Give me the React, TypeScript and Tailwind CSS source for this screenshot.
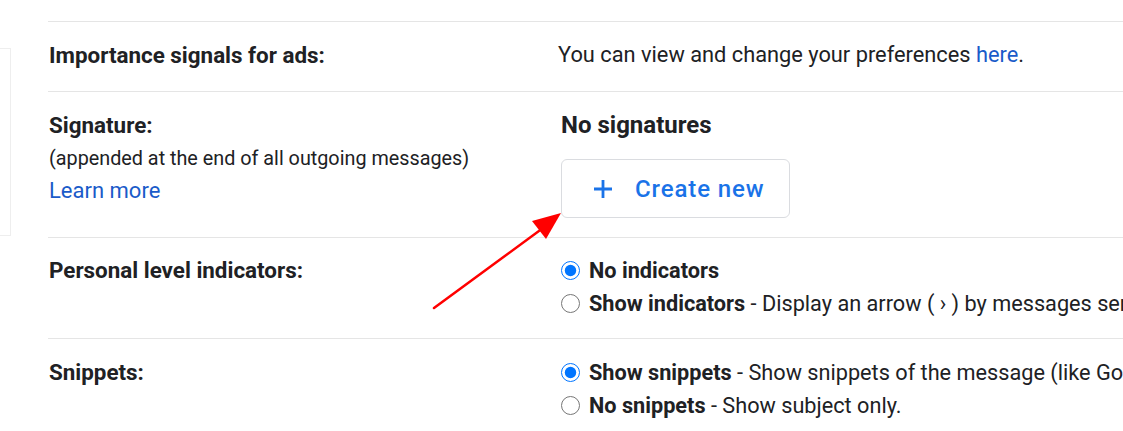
import React from "react";

const Label = ({ children }: { children: React.ReactNode }) => (
  <div className="text-[22.4px] leading-[24px] font-bold text-[#202124]">{children}</div>
);

const Radio = ({
  name,
  checked,
  title,
  desc,
}: {
  name: string;
  checked?: boolean;
  title: string;
  desc?: string;
}) => (
  <label className="flex items-center h-[33px] whitespace-nowrap">
    <input
      type="radio"
      name={name}
      defaultChecked={checked}
      className="m-0 w-[19px] h-[19px] accent-[#0075ff] shrink-0"
    />
    <span className="ml-[9px] text-[21.7px] leading-[24px] text-[#202124]">
      <b className="font-bold">{title}</b>
      {desc && <span> - {desc}</span>}
    </span>
  </label>
);

export default function App() {
  return (
    <div
      className="relative w-[1123px] h-[431px] overflow-hidden bg-white"
      style={{ fontFamily: "Roboto, 'Noto Sans', sans-serif" }}
    >
      <div className="flex">
        {/* edge of the left navigation panel */}
        <div className="mt-[48px] h-[188px] w-[11px] shrink-0 border-y border-r border-[#eeeeee]" />
        <div className="ml-[37px] flex-1 mt-[21px]">
          {/* Importance signals */}
          <div className="grid grid-cols-[510px_1fr] border-t border-[#e5e5e5] pt-[21px] h-[70px]">
            <div className="pl-[1px]">
              <Label>Importance signals for ads:</Label>
            </div>
            <div className="text-[21.8px] leading-[24px] text-[#202124] whitespace-nowrap">
              You can view and change your preferences{" "}
              <a className="text-[#1a5bc9]">here</a>.
            </div>
          </div>

          {/* Signature */}
          <div className="grid grid-cols-[510px_1fr] border-t border-[#e5e5e5] pt-[21px] h-[146px]">
            <div className="pl-[1px]">
              <Label>Signature:</Label>
              <div className="mt-[10px] text-[19.8px] leading-[24px] text-[#202124]">
                (appended at the end of all outgoing messages)
              </div>
              <div className="mt-[8px] text-[22px] leading-[24px] text-[#1a5bc9]">Learn more</div>
            </div>
            <div className="pl-[3px]">
              <div className="text-[24px] leading-[24px] font-bold text-[#202124]">No signatures</div>
              <button className="mt-[22px] flex items-center h-[59px] w-[229px] pl-[31px] border border-[#dadce0] rounded-[6px] bg-white">
                <svg width="20" height="20" viewBox="0 0 20 20" className="shrink-0">
                  <path d="M10 1v18M1 10h18" stroke="#1a73e8" strokeWidth="2.8" fill="none" />
                </svg>
                <span className="ml-[22px] text-[24px] leading-[24px] font-medium tracking-[0.9px] text-[#1a73e8] whitespace-nowrap">
                  Create new
                </span>
              </button>
            </div>
          </div>

          {/* Personal level indicators */}
          <div className="grid grid-cols-[510px_1fr] border-t border-[#e5e5e5] pt-[16px] h-[101px]">
            <div className="pl-[1px] pt-[4px]">
              <Label>Personal level indicators:</Label>
            </div>
            <div className="pl-[3px]">
              <Radio name="pli" checked title="No indicators" />
              <Radio
                name="pli"
                title="Show indicators"
                desc="Display an arrow ( › ) by messages sent to my address (not a mailing list), and a double arrow ( » ) by messages sent only to me."
              />
            </div>
          </div>

          {/* Snippets */}
          <div className="grid grid-cols-[510px_1fr] border-t border-[#e5e5e5] pt-[17px]">
            <div className="pl-[1px] pt-[4px]">
              <Label>Snippets:</Label>
            </div>
            <div className="pl-[3px]">
              <Radio
                name="snip"
                checked
                title="Show snippets"
                desc="Show snippets of the message (like Google Web Search!)."
              />
              <Radio name="snip" title="No snippets" desc="Show subject only." />
            </div>
          </div>
        </div>
      </div>

      {/* red annotation arrow */}
      <svg className="absolute left-0 top-0 pointer-events-none" width="1123" height="431">
        <line x1="434" y1="308" x2="543" y2="228" stroke="#ff0000" strokeWidth="2.5" strokeLinecap="round" />
        <polygon points="561,213 532,221 546,239" fill="#ff0000" />
      </svg>
    </div>
  );
}
